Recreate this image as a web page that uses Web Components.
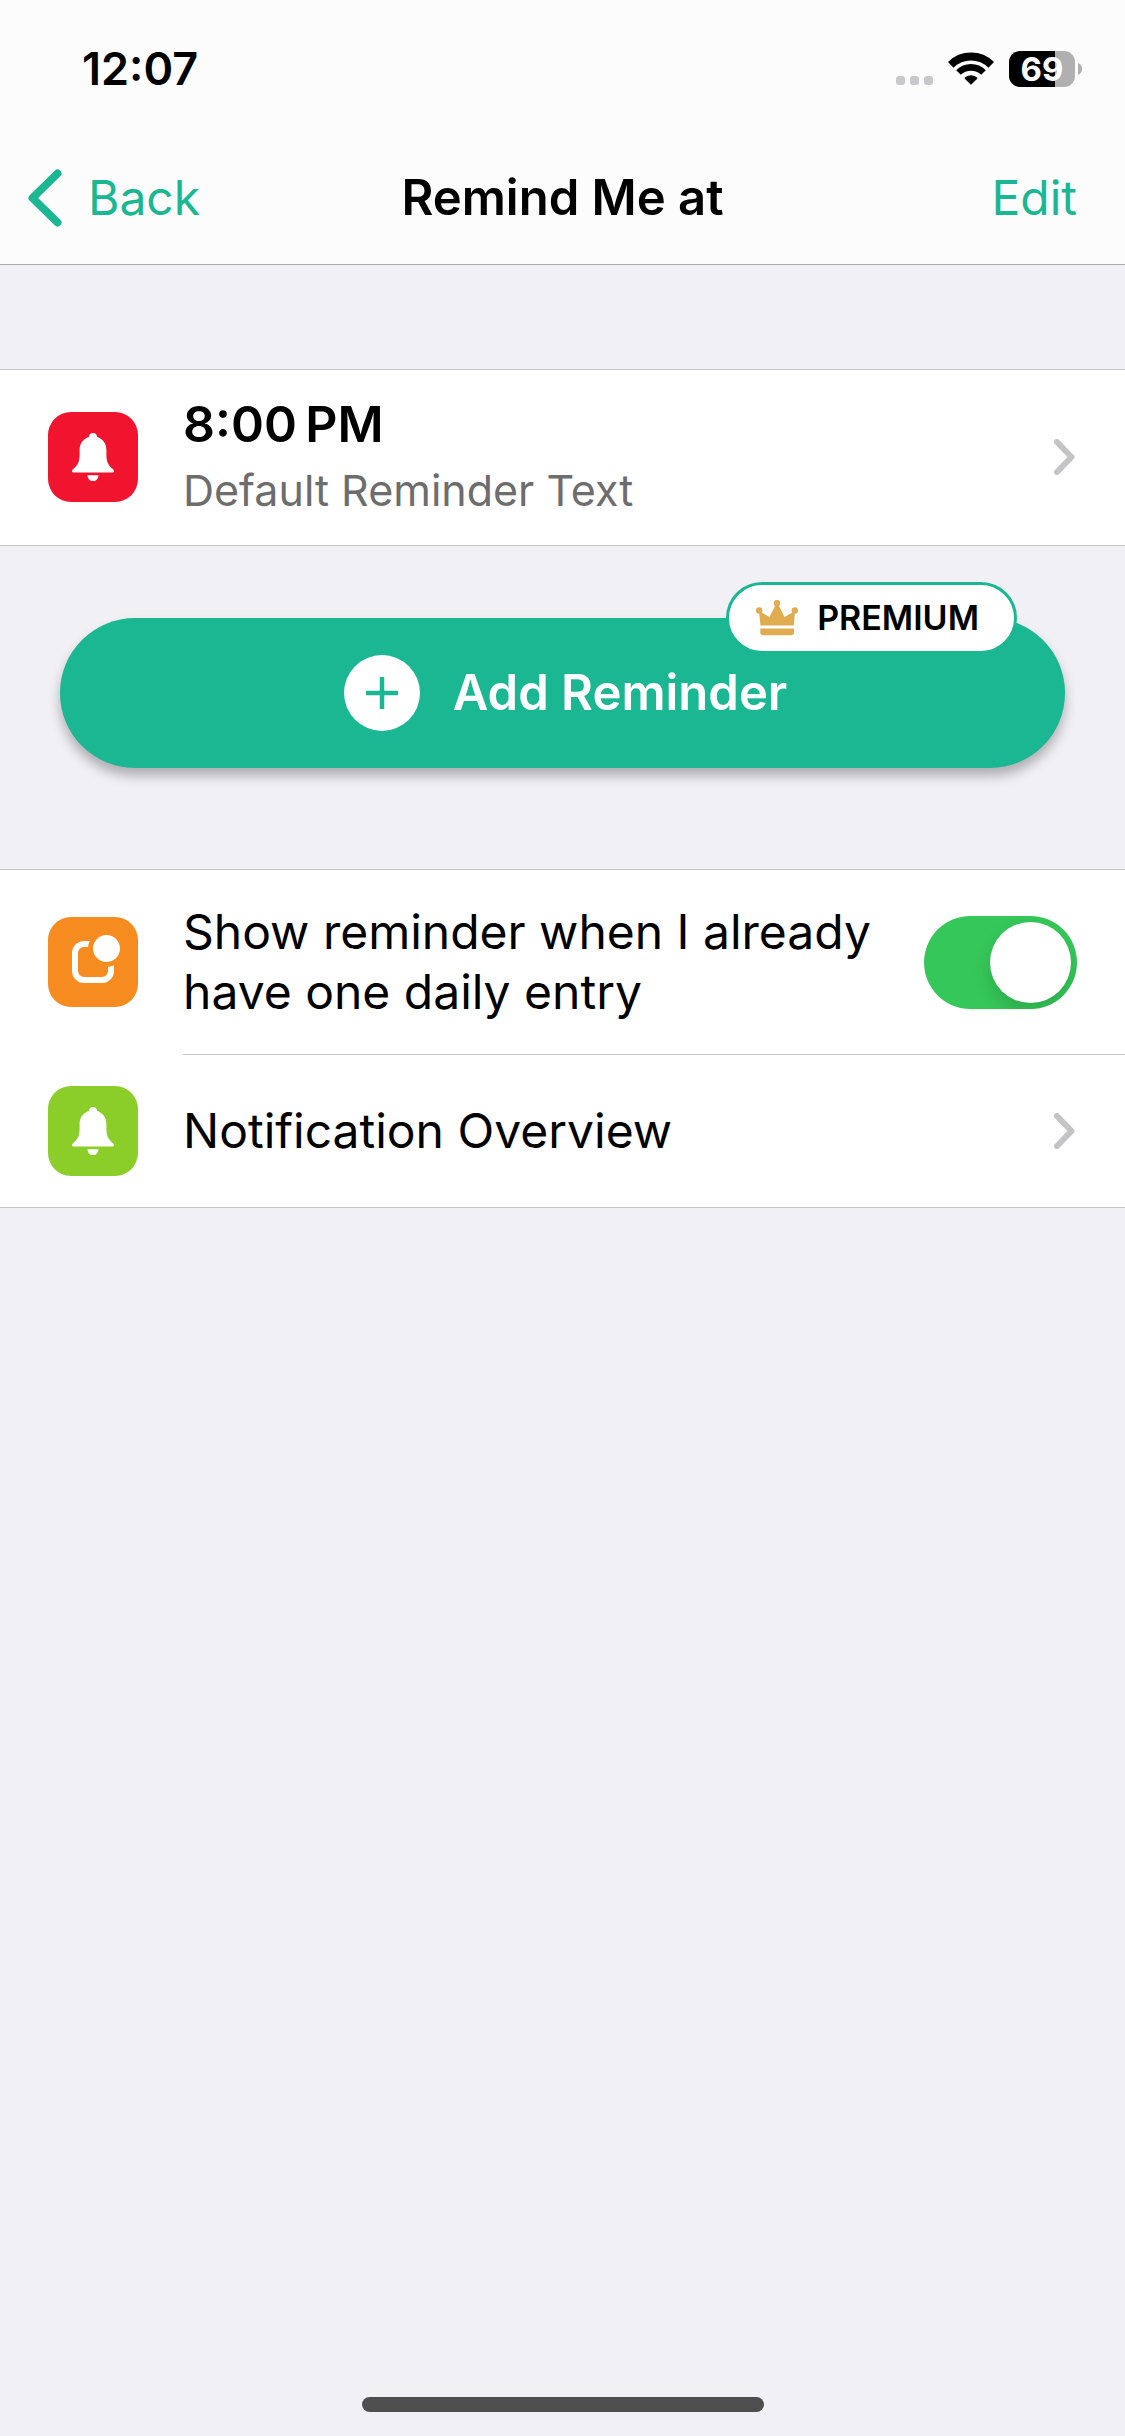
<!DOCTYPE html>
<html lang="en">
<head>
<meta charset="utf-8">
<meta name="viewport" content="width=device-width, initial-scale=1">
<title>Remind Me at</title>
<style>
  :root {
    --accent: #1ab792;
    --page: #f1f0f5;
    --line: #c6c6c8;
    --gutter: 48px;
  }
  body {
    margin: 0;
    background: var(--page);
    color: #000;
    font: 400 48px/60px Inter, "Liberation Sans", sans-serif;
  }
</style>
</head>
<body>
<reminder-page>
  <status-bar slot="header" time="12:07" battery="69"></status-bar>
  <nav-bar slot="header" back="Back" action="Edit">Remind Me at</nav-bar>
  <list-group>
    <link-row tile="red" href="#reminder" subtitle="Default Reminder Text">8:00&#x202F;PM</link-row>
  </list-group>
  <add-button badge="PREMIUM">Add Reminder</add-button>
  <list-group>
    <switch-row>Show reminder when I already have one daily entry</switch-row>
    <link-row tile="green" href="#overview">Notification Overview</link-row>
  </list-group>
</reminder-page>

<script>
  class BaseElement extends HTMLElement {
    connectedCallback() {
      if (this.shadowRoot) return;
      this.attachShadow({ mode: "open" }).innerHTML =
        `<style>:host,*{box-sizing:border-box}button{font:inherit;color:inherit;background:none;border:0;margin:0;padding:0;cursor:pointer}a{color:inherit;text-decoration:none}svg{display:block;flex:none}${this.styles()}</style>${this.markup()}`;
    }
    attr(name) { return this.getAttribute(name) || ""; }
  }

  customElements.define("reminder-page", class extends BaseElement {
    styles() {
      return `
        :host { display: flex; flex-direction: column; min-height: 100vh; }
        header { background: #fcfcfd; border-bottom: 1px solid #a9a9ad; }
        main { display: flex; flex-direction: column; padding-top: 104px; }
        footer { margin-top: auto; padding: 24px; display: flex; justify-content: center; }
        .indicator { width: 402px; height: 15px; border-radius: 8px; background: #4e4e4e; }`;
    }
    markup() {
      return `<header><slot name="header"></slot></header>
        <main><slot></slot></main>
        <footer><div class="indicator"></div></footer>`;
    }
  });

  customElements.define("status-bar", class extends BaseElement {
    styles() {
      return `
        :host { display: flex; align-items: center; justify-content: space-between;
                height: 132px; padding: 6px 43px 0 82px; }
        time { font-size: 45px; font-weight: 600; }
        .icons { display: flex; align-items: center; height: 36px; }
        .dots { align-self: flex-end; margin: 0 15px 2px 0; }
        .wifi { margin-right: 15px; }
        .battery { width: 66px; height: 36px; border-radius: 11px; color: #fff;
                   font-size: 33px; line-height: 36px; font-weight: 700; text-align: center;
                   background: linear-gradient(90deg, #000 70%, #b0b0b1 70%); }
        .nub { margin-left: 3px; }`;
    }
    markup() {
      return `<time>${this.attr("time")}</time>
        <div class="icons">
          <svg class="dots" width="37" height="9" fill="#c8c8ca"><rect width="9" height="9" rx="3"/><rect x="14" width="9" height="9" rx="3"/><rect x="28" width="9" height="9" rx="3"/></svg>
          <svg class="wifi" width="46" height="34" viewBox="0 0 46 34" fill="none" stroke="#000">
            <path stroke-width="8" d="M2.8 12.8A28.8 28.8 0 0 1 43.2 12.8"/>
            <path stroke-width="6.6" d="M10.5 20.5A17.8 17.8 0 0 1 35.500 20.500"/>
            <path fill="#000" stroke-width="1" stroke-linejoin="round" d="M23 32.300L16.800 26.200A9.200 9.200 0 0 1 29.200 26.200Z"/>
          </svg>
          <div class="battery">${this.attr("battery")}</div>
          <svg class="nub" width="4" height="12" fill="#b0b0b1"><path d="M0 0C2.500 1 4 3 4 6S2.500 11 0 12Z"/></svg>
        </div>`;
    }
  });

  customElements.define("nav-bar", class extends BaseElement {
    styles() {
      return `
        :host { display: grid; grid-template-columns: 1fr auto 1fr; align-items: center;
                height: 132px; padding: 0 28px; }
        h1 { margin: 0; font-size: 49px; font-weight: 600; }
        button { color: var(--accent); }
        .back { justify-self: start; display: flex; align-items: center; gap: 26px; }
        .action { justify-self: end; margin-right: 20px; }`;
    }
    markup() {
      return `<button class="back"><svg width="34" height="58" viewBox="0 0 34 58" fill="none" stroke="currentColor" stroke-width="8" stroke-linecap="round" stroke-linejoin="round"><path d="M29.500 4.500L4.500 29L29.500 53.500"/></svg>${this.attr("back")}</button>
        <h1><slot></slot></h1>
        <button class="action">${this.attr("action")}</button>`;
    }
  });

  customElements.define("list-group", class extends BaseElement {
    styles() {
      return `:host { display: block; background: #fff; border-top: 1px solid var(--line); border-bottom: 1px solid var(--line); }`;
    }
    markup() { return `<slot></slot>`; }
  });

  const glyphs = {
    bell: `<path d="M45 21C47.400 21 49 22.600 49.200 25.100C54.800 27 58.400 31.800 58.400 38V43C58.400 49.800 60.400 53.600 64.800 57C66.600 58.500 66.200 60.500 64.300 60.500H25.700C23.800 60.500 23.400 58.500 25.200 57C29.600 53.600 31.600 49.800 31.600 43V38C31.600 31.800 35.200 27 40.800 25.100C41 22.600 42.600 21 45 21ZM39.500 63.200H50.500C50.300 66.700 48.200 69 45 69S39.700 66.700 39.500 63.200Z"/>`,
    badge: `<rect x="27" y="27" width="36" height="36" rx="9" fill="none" stroke="#fff" stroke-width="6"/><circle cx="58.500" cy="31.500" r="18.500" fill="#f68b1f"/><circle cx="58.500" cy="31.500" r="13.500"/>`
  };
  const tiles = {
    red: ["#f0142f", "bell"],
    green: ["#8bce29", "bell"],
    orange: ["#f68b1f", "badge"]
  };

  customElements.define("icon-tile", class extends BaseElement {
    styles() {
      return `:host { display: block; flex: none; width: 90px; height: 90px; border-radius: 23px;
                      background: ${tiles[this.attr("kind")][0]}; }`;
    }
    markup() {
      return `<svg width="90" height="90" viewBox="0 0 90 90" fill="#fff">${glyphs[tiles[this.attr("kind")][1]]}</svg>`;
    }
  });

  const rowStyles = `
    .row { display: flex; align-items: center; gap: 45px; padding: 0 var(--gutter); }
    .text { flex: 1; min-width: 0; }`;

  customElements.define("link-row", class extends BaseElement {
    styles() {
      return `:host { display: block; } ${rowStyles}
        .row { min-height: 152px; }
        .row.tall { min-height: 175px; padding-bottom: 2px; }
        .title { display: block; }
        .tall .title { font-size: 50px; font-weight: 600; line-height: 66px; }
        .subtitle { display: block; color: #6d6d6d; font-size: 43px; line-height: 66px; }`;
    }
    markup() {
      const subtitle = this.attr("subtitle");
      return `<a class="row ${subtitle ? "tall" : ""}" href="${this.attr("href")}">
        <icon-tile kind="${this.attr("tile")}"></icon-tile>
        <span class="text"><span class="title"><slot></slot></span>${subtitle ? `<span class="subtitle">${subtitle}</span>` : ""}</span>
        <svg width="24" height="36" viewBox="0 0 24 36" fill="none" stroke="#c4c4c6" stroke-width="6" stroke-linecap="round" stroke-linejoin="round"><path d="M4 3L18.500 18L4 33"/></svg>
      </a>`;
    }
  });

  customElements.define("switch-row", class extends BaseElement {
    styles() {
      return `:host { display: block; } ${rowStyles}
        .row { min-height: 184px; }
        hr { margin: 0 0 0 183px; border: 0; height: 1px; background: var(--line); }
        input { appearance: none; flex: none; margin: 0; width: 153px; height: 93px; padding: 6px;
                border-radius: 47px; background: #e9e9ea; display: flex; cursor: pointer; overflow: hidden; }
        input:checked { background: #35c759; justify-content: flex-end; }
        input::before { content: ""; width: 81px; height: 81px; border-radius: 50%; background: #fff;
                        box-shadow: 0 9px 18px rgba(0,0,0,.14); }`;
    }
    markup() {
      return `<div class="row">
        <icon-tile kind="orange"></icon-tile>
        <label class="text" for="toggle"><slot></slot></label>
        <input id="toggle" type="checkbox" role="switch" checked>
      </div><hr>`;
    }
  });

  customElements.define("add-button", class extends BaseElement {
    styles() {
      return `
        :host { display: block; padding: 72px 60px 101px; }
        button { position: relative; display: flex; align-items: center; justify-content: center; gap: 33px;
                 width: 100%; height: 150px; padding-left: 6px; border-radius: 75px; background: var(--accent); color: #fff;
                 font-size: 49px; font-weight: 600; box-shadow: 0 8px 12px rgba(0,0,0,.28); }
        .badge { position: absolute; right: 48px; top: -36px; display: flex; align-items: center; gap: 19px;
                 height: 72px; padding: 0 35px 0 27px; border: 3px solid var(--accent); border-radius: 36px;
                 background: #fff; color: #000; font-size: 34px; line-height: 40px; }`;
    }
    markup() {
      return `<button>
        <svg width="76" height="76" viewBox="0 0 76 76"><circle cx="38" cy="38" r="38" fill="#fff"/><path d="M38 22V54M22 38H54" stroke="#1ab792" stroke-width="4.500"/></svg>
        <span><slot></slot></span>
        <span class="badge"><svg width="42" height="36" viewBox="0 0 42 36" fill="#dfac4f"><circle cx="3.200" cy="10.500" r="3.200"/><circle cx="21" cy="3.200" r="3.200"/><circle cx="38.800" cy="10.500" r="3.200"/><path d="M3 11L13.500 17L19.500 5H22.500L28.500 17L39 11L37.800 25.500H4.500Z"/><path d="M4.300 28.500H38V32.500Q38 35.300 35.300 35.300H7Q4.300 35.300 4.300 32.500Z"/></svg>${this.attr("badge")}</span>
      </button>`;
    }
  });
</script>
</body>
</html>
